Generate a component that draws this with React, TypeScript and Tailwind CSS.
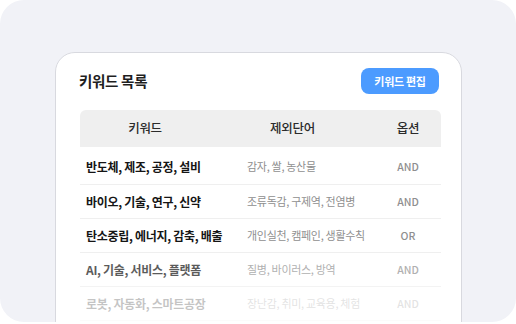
import React from "react";

const rows = [
  { kw: "반도체, 제조, 공정, 설비", ex: "감자, 쌀, 농산물", op: "AND", fade: "" },
  { kw: "바이오, 기술, 연구, 신약", ex: "조류독감, 구제역, 전염병", op: "AND", fade: "" },
  { kw: "탄소중립, 에너지, 감축, 배출", ex: "개인실천, 캠페인, 생활수칙", op: "OR", fade: "" },
  { kw: "AI, 기술, 서비스, 플랫폼", ex: "질병, 바이러스, 방역", op: "AND", fade: "opacity-70" },
  { kw: "로봇, 자동화, 스마트공장", ex: "장난감, 취미, 교육용, 체험", op: "AND", fade: "opacity-25" },
];

export default function App() {
  return (
    <div
      className="w-[516px] h-[324px] bg-white"
      style={{ fontFamily: '"Noto Sans CJK KR", "Noto Sans", sans-serif' }}
    >
      <div className="w-[516px] h-[322px] rounded-[24px] bg-[#f1f2f7] overflow-hidden pt-[52px] pl-[55px]">
        <div className="w-[407px] h-[300px] bg-white border border-[#d8d9df] rounded-t-[20px] pl-[23px] pr-[20px] pt-[15px]">
          {/* title + action */}
          <div className="flex items-center justify-between h-[26px] mr-[2px]">
            <h2 className="text-[14.5px] font-bold text-[#1f1f1f] tracking-[-0.3px]">키워드 목록</h2>
            <button className="w-[78px] h-[26px] rounded-[8px] bg-[#4c9bff] text-white text-[11px] font-bold tracking-[-0.3px]">
              키워드 편집
            </button>
          </div>

          {/* table */}
          <div className="mt-[16px] ml-[1px]">
            <div className="grid grid-cols-[130px_165px_1fr] items-center h-[37px] bg-[#efefef] rounded-t-[6px] text-[12.5px] font-medium text-[#2b2b2b] tracking-[-0.3px]">
              <span className="text-center">키워드</span>
              <span className="text-center">제외단어</span>
              <span className="text-center">옵션</span>
            </div>

            {rows.map((r, i) => (
              <div
                key={r.kw}
                className={`grid grid-cols-[167px_128px_1fr] items-center border-b border-[#efefef] ${
                  i === 0 ? "h-[38px] pt-[2px]" : "h-[34px]"
                } ${r.fade}`}
              >
                <span className="pl-[6px] text-[12px] font-semibold text-[#151515] tracking-[-0.3px] whitespace-nowrap">
                  {r.kw}
                </span>
                <span className="text-[11px] text-[#8f8f8f] tracking-[-0.3px] whitespace-nowrap">{r.ex}</span>
                <span className="text-center text-[10.5px] font-medium text-[#8f8f8f]">{r.op}</span>
              </div>
            ))}
          </div>
        </div>
      </div>
    </div>
  );
}
